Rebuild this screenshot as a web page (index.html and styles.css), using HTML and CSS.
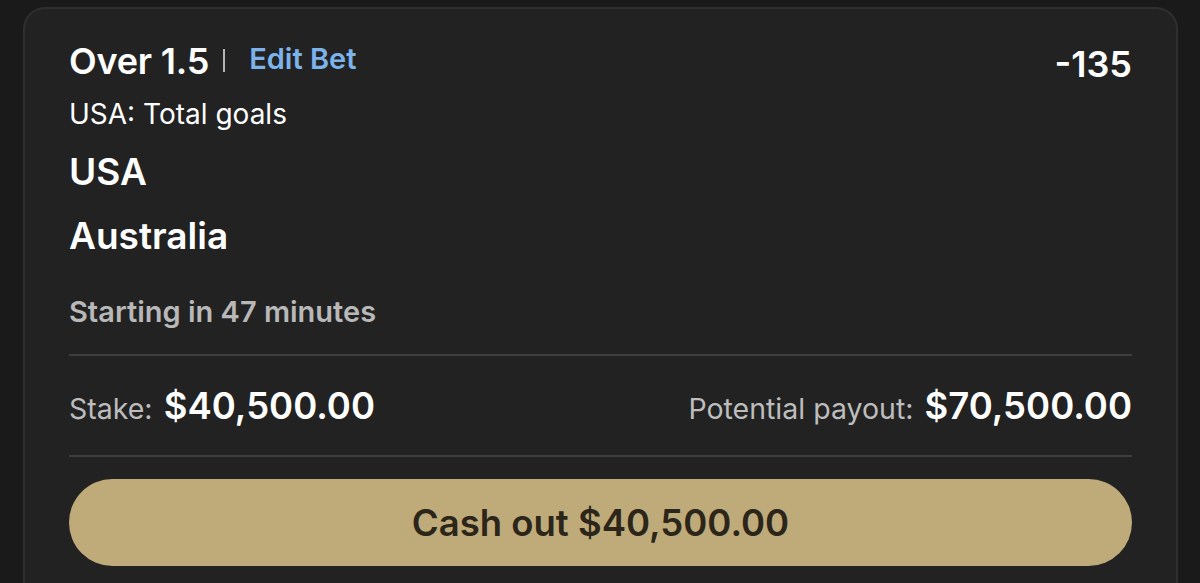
FILE: index.html
```html
<!DOCTYPE html>
<html lang="en">
<head>
 <meta charset="UTF-8">
 <meta name="viewport" content="width=device-width, initial-scale=1.0">
 <title>Bet Slip</title>
 <link rel="stylesheet" href="styles.css">
</head>
<body>
 <div class="card">
 <div class="top-row">
 <div class="title">
 <span class="pick">Over 1.5</span>
 <span class="sep"></span>
 <a href="#edit" class="edit">Edit Bet</a>
 </div>
 <div class="odds">-135</div>
 </div>
 <div class="market">USA: Total goals</div>
 <div class="team team-first">USA</div>
 <div class="team">Australia</div>
 <div class="start">Starting in 47 minutes</div>
 <div class="amounts">
 <div class="amount"><span class="label">Stake:</span> <span class="value">$40,500.00</span></div>
 <div class="amount"><span class="label">Potential payout:</span> <span class="value">$70,500.00</span></div>
 </div>
 <button class="cashout">Cash out $40,500.00</button>
 </div>
</body>
</html>
```

FILE: styles.css
```css
body {
margin: 0;
padding: 7px 22px 0 23px;
background-color: #1a1a1a;
font-family: 'Inter', 'Roboto', sans-serif;
color: #fff;
height: 576px;
overflow: hidden;
}
.card {
background-color: #222222;
border: 2px solid #2f2f2f;
border-bottom: none;
border-radius: 22px 22px 0 0;
padding: 30px 44px 40px 44px;
height: 600px;
}
.top-row {
display: flex;
justify-content: space-between;
align-items: flex-start;
}
.title {
display: flex;
align-items: flex-start;
}
.pick {
font-size: 36px;
line-height: 44px;
font-weight: 600;
letter-spacing: -0.2px;
}
.sep {
display: inline-block;
width: 2px;
height: 23px;
background-color: #b5b5b5;
margin: 10px 24px 0 14px;
}
.edit {
color: #7cb3eb;
font-size: 29px;
line-height: 44px;
font-weight: 600;
text-decoration: none;
margin-top: -2px;
}
.odds {
font-size: 36px;
line-height: 44px;
font-weight: 600;
padding-top: 3px;
}
.market {
font-size: 28px;
line-height: 34px;
margin-top: 11px;
}
.team {
font-size: 37px;
line-height: 44px;
font-weight: 600;
margin-top: 20px;
}
.team-first {
margin-top: 19px;
}
.start {
font-size: 29px;
line-height: 36px;
font-weight: 600;
color: #b8b8b8;
margin-top: 36px;
padding-bottom: 24px;
border-bottom: 2px solid #3e3e3e;
}
.amounts {
display: flex;
justify-content: space-between;
padding: 28px 0 24px 0;
border-bottom: 2px solid #3e3e3e;
}
.amount {
font-size: 36px;
line-height: 44px;
}
.label {
font-size: 28.5px;
color: #bdbdbd;
}
.value {
font-size: 36.5px;
font-weight: 600;
margin-left: 1px;
}
.cashout {
display: block;
width: 100%;
margin-top: 22px;
height: 87px;
border: none;
border-radius: 44px;
background-color: #bfab79;
color: #2b2619;
font-family: 'Inter', 'Roboto', sans-serif;
font-size: 36.5px;
font-weight: 600;
cursor: pointer;
}
```
